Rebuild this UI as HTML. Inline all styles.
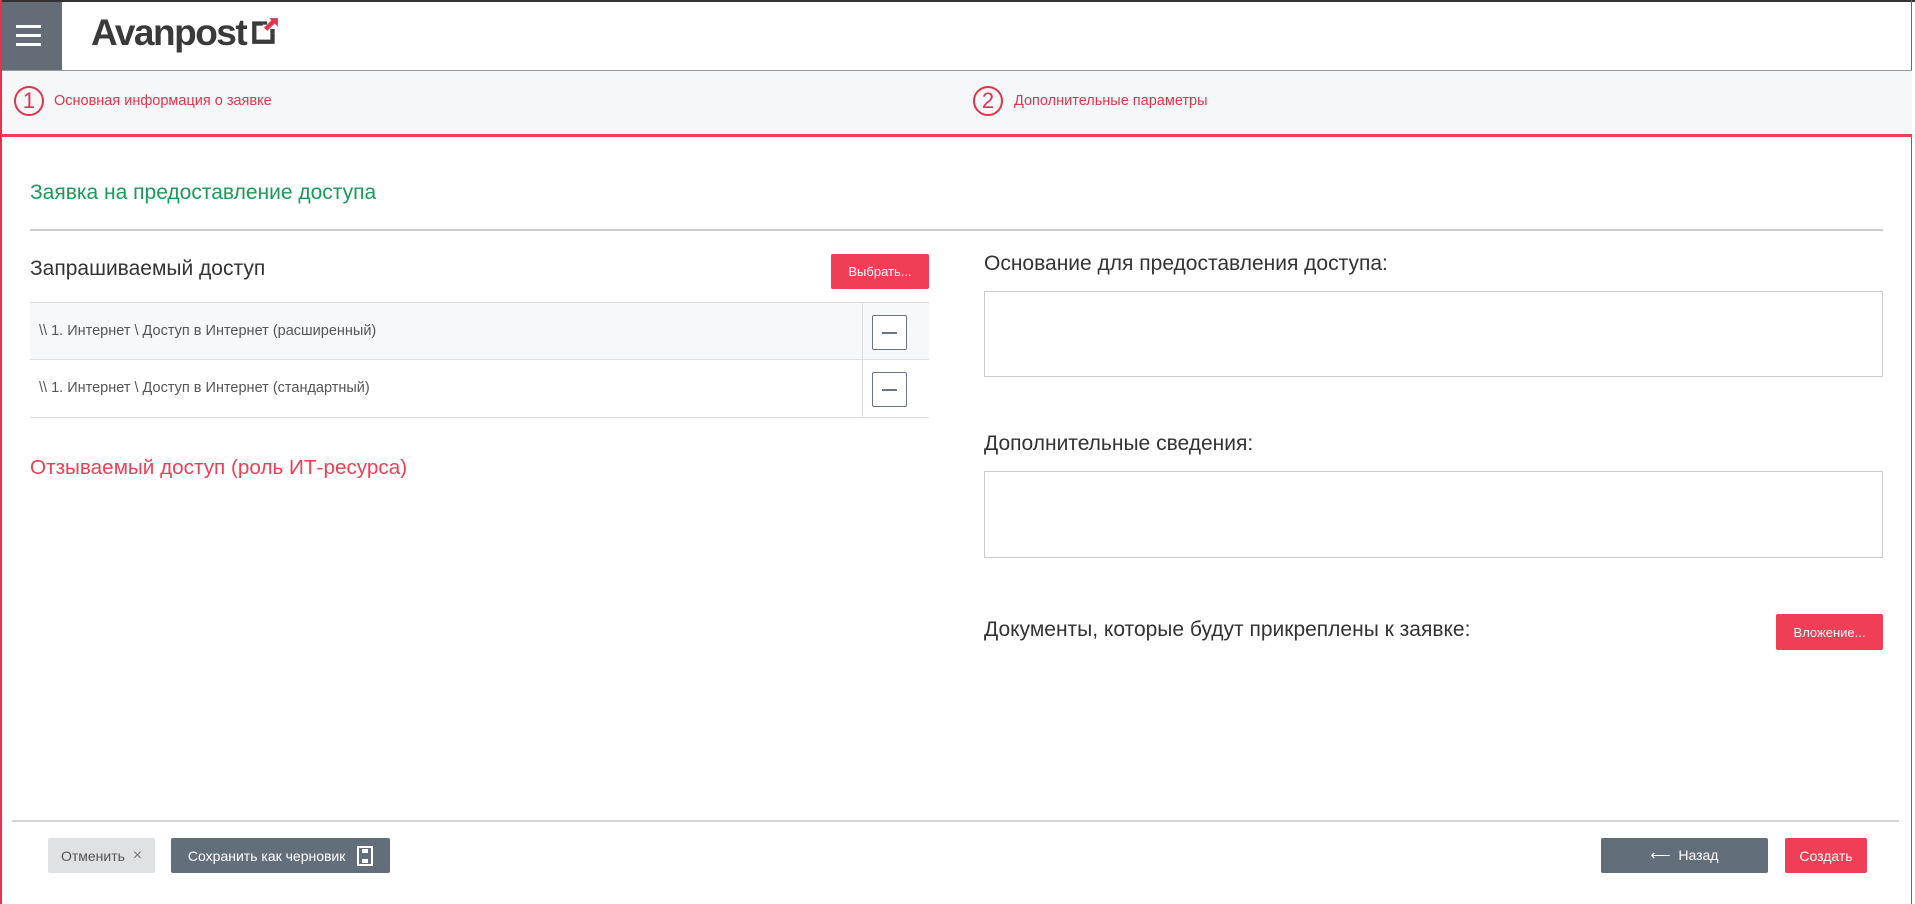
<!DOCTYPE html>
<html><head><meta charset="utf-8"><style>
*{box-sizing:border-box;margin:0;padding:0}
body{width:1915px;height:904px;position:relative;background:#fff;font-family:"Liberation Sans",sans-serif;overflow:hidden;color:#333}
.a{position:absolute}
.btn{position:absolute;color:#fff;font-size:13px;display:flex;align-items:center;justify-content:center;border-radius:2px}
.ta{position:absolute;border:1px solid #ccc;background:#fff}
.lbl{position:absolute;font-size:21px;color:#333;white-space:nowrap}
.row{position:absolute;left:30px;width:899px;border-bottom:1px solid #ddd;font-size:14.5px;color:#555}
.mb{position:absolute;left:842px;width:35px;height:35px;border:1px solid #6b7480;border-radius:2px;background:#fff}
.mb:after{content:"";position:absolute;left:9px;right:9px;top:16px;height:2px;background:#6b7480}
</style></head><body>
<div class="a" style="left:0;top:0;width:1915px;height:2px;background:#333"></div>
<div class="a" style="left:0;top:0;width:2px;height:904px;background:#e0344c"></div>
<div class="a" style="right:3px;top:0;width:1px;height:904px;background:#e0344c"></div>
<div class="a" style="left:2px;top:2px;width:60px;height:68px;background:#636c77"></div>
<div class="a" style="left:16px;top:25px;width:25px;height:3px;background:#fff"></div>
<div class="a" style="left:16px;top:34px;width:25px;height:3px;background:#fff"></div>
<div class="a" style="left:16px;top:43px;width:25px;height:3px;background:#fff"></div>
<div class="a" style="left:91px;top:12px;font-size:37px;font-weight:bold;color:#3a3a3a;letter-spacing:-1.5px">Avanpost</div>
<svg class="a" style="left:250px;top:16px" width="30" height="30" viewBox="0 0 28 28"><path d="M2 5h10v4H6v13h13v-6h4v10H2z" fill="#3a3a3a"/><path d="M12 5h4v3h-4zM19 12h4v4h-4z" fill="#3a3a3a"/><path d="M18 2h8v8l-3-3-7 7-3-3 7-7z" fill="#e0344c"/></svg>
<div class="a" style="left:2px;top:70px;width:1910px;height:1px;background:#999"></div>
<div class="a" style="left:2px;top:71px;width:1910px;height:63px;background:#f6f7f9"></div>
<div class="a" style="left:2px;top:134px;width:1910px;height:3px;background:#ef3e56"></div>
<div class="a" style="left:14px;top:86px;width:30px;height:30px;border:2px solid #e0344c;border-radius:50%;color:#e0344c;font-size:22px;line-height:26px;text-align:center">1</div>
<div class="a" style="left:54px;top:93px;font-size:14.5px;color:#e0344c">Основная информация о заявке</div>
<div class="a" style="left:973px;top:86px;width:30px;height:30px;border:2px solid #e0344c;border-radius:50%;color:#e0344c;font-size:22px;line-height:26px;text-align:center">2</div>
<div class="a" style="left:1014px;top:93px;font-size:14.5px;color:#e0344c">Дополнительные параметры</div>
<div class="a" style="left:30px;top:181px;font-size:21px;color:#1a9a5a">Заявка на предоставление доступа</div>
<div class="a" style="left:30px;top:229px;width:1853px;height:2px;background:#ccc"></div>
<div class="lbl" style="left:30px;top:257px">Запрашиваемый доступ</div>
<div class="btn" style="left:831px;top:254px;width:98px;height:35px;background:#ef3e56">Выбрать...</div>
<div class="a" style="left:30px;top:302px;width:899px;height:1px;background:#ddd"></div>
<div class="row" style="top:303px;height:57px;background:#f7f8fa"><span class="a" style="left:9px;top:20px">\\ 1. Интернет \ Доступ в Интернет (расширенный)</span><div class="a" style="left:832px;top:0;width:1px;height:57px;background:#ddd"></div><div class="mb" style="top:12px"></div></div>
<div class="row" style="top:360px;height:58px"><span class="a" style="left:9px;top:20px">\\ 1. Интернет \ Доступ в Интернет (стандартный)</span><div class="a" style="left:832px;top:0;width:1px;height:57px;background:#ddd"></div><div class="mb" style="top:12px"></div></div>
<div class="a" style="left:30px;top:456px;font-size:20.7px;color:#ef3e56">Отзываемый доступ (роль ИТ-ресурса)</div>
<div class="lbl" style="left:984px;top:252px">Основание для предоставления доступа:</div>
<div class="ta" style="left:984px;top:291px;width:899px;height:86px"></div>
<div class="lbl" style="left:984px;top:432px">Дополнительные сведения:</div>
<div class="ta" style="left:984px;top:471px;width:899px;height:87px"></div>
<div class="lbl" style="left:984px;top:618px">Документы, которые будут прикреплены к заявке:</div>
<div class="btn" style="left:1776px;top:614px;width:107px;height:36px;background:#ef3e56">Вложение...</div>
<div class="a" style="left:12px;top:820px;width:1887px;height:2px;background:#d4d4d4"></div>
<div class="btn" style="left:48px;top:838px;width:107px;height:35px;background:#e0e1e3;color:#555;font-size:14px">Отменить &nbsp;<span style="font-size:16px;color:#777">×</span></div>
<div class="btn" style="left:171px;top:838px;width:219px;height:35px;background:#636e7b;font-size:14px">Сохранить как черновик&nbsp;&nbsp;&nbsp;<svg width="16" height="20" viewBox="0 0 16 20"><rect x="1" y="1" width="14" height="18" fill="none" stroke="#fff" stroke-width="2"/><rect x="5" y="3" width="6" height="4" fill="#fff"/><rect x="5" y="13" width="6" height="4" fill="#fff"/></svg></div>
<div class="btn" style="left:1601px;top:838px;width:167px;height:35px;background:#636e7b;font-size:14px">⟵&nbsp; Назад</div>
<div class="btn" style="left:1785px;top:838px;width:82px;height:35px;background:#ef3e56;font-size:14px">Создать</div>
</body></html>
